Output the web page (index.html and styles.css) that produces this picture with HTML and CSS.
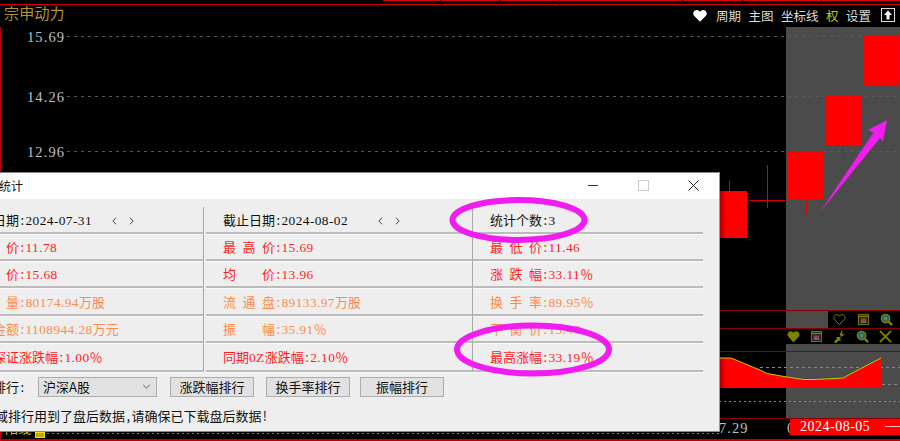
FILE: index.html
```html
<!DOCTYPE html>
<html lang="zh">
<head>
<meta charset="utf-8">
<title>区间统计</title>
<link rel="stylesheet" href="styles.css">
</head>
<body>
<main class="desktop">
  <div class="tabs"><span class="t1"></span><span class="t2"></span><span class="t3"></span><span class="t4"></span><span class="t5"></span><span class="t6"></span><span class="t7"></span></div>
  <div class="line-top"></div>
  <div class="line-left"></div>
  <header class="stock-name">宗申动力</header>
  <nav class="toolbar">
    <svg class="ico-heart" viewBox="0 0 16 14"><path d="M8 14 1.200 7.200C-.6 5.200.2 1 3.800 .6 5.800.4 7.200 1.400 8 2.800 8.800 1.400 10.200.4 12.200.6 15.800 1 16.600 5.200 14.800 7.200Z"/></svg>
    <span>周期</span><span>主图</span><span>坐标线</span><span class="hl">权</span><span>设置</span>
    <svg class="ico-up" viewBox="0 0 14 14"><rect x=".5" y=".5" width="13" height="13" fill="none" stroke="#ddd"/><path d="M7 2.500 11 7H8.500v4.500h-3V7H3Z" fill="#fff"/></svg>
  </nav>

  <div class="gray g-main"></div>
  <div class="gray g-mid"></div>
  <div class="gray g-low"></div>

  <div class="price p1">15.69</div>
  <div class="price p2">14.26</div>
  <div class="price p3">12.96</div>
  <div class="dash d1"></div>
  <div class="dash d2"></div>
  <div class="dash d3"></div>

  <div class="candle c0"></div><div class="wick w0"></div>
  <div class="doji-h"></div><div class="doji-v"></div>
  <div class="candle c1"></div><div class="wick w1"></div>
  <div class="candle c2"></div><div class="wick w2"></div>
  <div class="candle c3"></div><div class="wick w3"></div>

  <div class="rline r1"></div>
  <div class="rline r2"></div>
  <div class="rline r3"></div>
  <div class="black-strip"></div>
  <div class="icons i-a">
    <svg viewBox="0 0 14 14"><path d="M7 12.500 1.500 6.500C0 4 2 1.500 4.200 1.700 5.500 1.800 6.500 2.500 7 3.500 7.500 2.500 8.500 1.800 9.800 1.700 12 1.500 14 4 12.500 6.500Z" fill="none" stroke="#808000"/></svg>
    <svg viewBox="0 0 14 14"><rect x="1.500" y="1.500" width="11" height="11" fill="#222" stroke="#808000"/><rect x="2" y="3" width="10" height="1.500" fill="#808000"/><rect x="4" y="6" width="6" height="3" fill="#b33"/><rect x="4" y="9" width="6" height="1.500" fill="#39c"/></svg>
    <svg viewBox="0 0 14 14"><circle cx="6" cy="6" r="4.500" fill="#365" stroke="#808000" stroke-width="1.500"/><circle cx="6" cy="6" r="2" fill="#3a8a9a"/><path d="M9.500 9.500l3.500 3.500" stroke="#808000" stroke-width="2.500"/></svg>
  </div>
  <div class="icons i-b">
    <svg viewBox="0 0 14 14"><path d="M7 13.500 1 6.800C-.6 4 2 1 4.200 1.300 5.500 1.500 6.500 2.200 7 3.200 7.500 2.200 8.500 1.500 9.800 1.300 12 1 14.600 4 13 6.800Z" fill="#808000"/></svg>
    <svg viewBox="0 0 14 14"><rect x="1.500" y="1.500" width="11" height="11" fill="#222" stroke="#808000"/><rect x="2" y="3" width="10" height="1.500" fill="#808000"/><rect x="4" y="6" width="6" height="3" fill="#b33"/><rect x="4" y="9" width="6" height="1.500" fill="#39c"/></svg>
    <svg viewBox="0 0 14 14"><path d="M1 13 4.500 9 3 7.500H8V12.500L6.500 11 3 14.500ZM10 1V4.500H13L8.500 7.500 7 3.500H8.500V1Z" fill="#808000"/></svg>
    <svg viewBox="0 0 14 14"><circle cx="6" cy="6" r="4.500" fill="#365" stroke="#808000" stroke-width="1.500"/><circle cx="6" cy="6" r="2" fill="#3a8a9a"/><path d="M9.500 9.500l3.500 3.500" stroke="#808000" stroke-width="2.500"/></svg>
    <svg viewBox="0 0 14 14"><path d="M1 1 13 13M13 1 1 13" stroke="#808000" stroke-width="2"/></svg>
  </div>

  <div class="dash d4"></div>
  <div class="dash d5"></div>
  <div class="dash d6"></div>
  <svg class="area" viewBox="0 0 200 50">
    <defs><linearGradient id="edge" x1="0" x2="1" y1="0" y2="0"><stop offset="0" stop-color="#900"/><stop offset=".04" stop-color="#f00"/></linearGradient></defs>
    <path d="M0 1H12L41 13 48 16.500 68 20 85 22.500 96 22.500 115 21.500 124 21 141 12 162 1V31H0Z" fill="url(#edge)"/>
    <path d="M0 1H12L41 13 48 16.500 68 20 85 22.500 96 22.500 115 21.500 124 21 141 12 162 1" fill="none" stroke="#c8c800"/>
  </svg>

  <div class="rline r4"></div>
  <div class="axis a1">7.29</div>
  <div class="axis a2">0</div>
  <div class="date-tag">2024-08-05<i></i></div>
  <div class="legend-text">阳线</div>
  <div class="legend-box"></div>
  <div class="dash d7"></div>
  <div class="rline r5"></div>
  <div class="line-left ll2"></div>

  <section class="dialog">
    <div class="titlebar">
      <span class="title">区间统计</span>
      <span class="win-min"></span><span class="win-max"></span>
      <svg class="win-close" viewBox="0 0 11 11"><path d="M.5.5 10.500 10.500M10.500.5.5 10.500" stroke="#222" stroke-width="1"/></svg>
    </div>
    <div class="stats">
      <div class="cell k"><span>起始日期<i class="c">:</i><b>2024-07-31</b></span><span class="chev"><svg viewBox="0 0 6 10"><path d="M5 1 1 5l4 4"/></svg><svg viewBox="0 0 6 10"><path d="M1 1l4 4-4 4"/></svg></span></div>
      <div class="cell k"><span>截止日期<i class="c">:</i><b>2024-08-02</b></span><span class="chev wide"><svg viewBox="0 0 6 10"><path d="M5 1 1 5l4 4"/></svg><svg viewBox="0 0 6 10"><path d="M1 1l4 4-4 4"/></svg></span></div>
      <div class="cell k"><span>统计个数<i class="c">:</i><b>3</b></span></div>

      <div class="cell r"><span>开&ensp;盘&ensp;价<i class="c">:</i><b>11.78</b></span></div>
      <div class="cell r"><span>最&ensp;高&ensp;价<i class="c">:</i><b>15.69</b></span></div>
      <div class="cell r"><span>最&ensp;低&ensp;价<i class="c">:</i><b>11.46</b></span></div>

      <div class="cell r"><span>收&ensp;盘&ensp;价<i class="c">:</i><b>15.68</b></span></div>
      <div class="cell r"><span>均&emsp;&emsp;价<i class="c">:</i><b>13.96</b></span></div>
      <div class="cell r"><span>涨&ensp;跌&ensp;幅<i class="c">:</i><b>33.11</b>％</span></div>

      <div class="cell o"><span>成&ensp;交&ensp;量<i class="c">:</i><b>80174.94</b>万股</span></div>
      <div class="cell o"><span>流&ensp;通&ensp;盘<i class="c">:</i><b>89133.97</b>万股</span></div>
      <div class="cell o"><span>换&ensp;手&ensp;率<i class="c">:</i><b>89.95</b>％</span></div>

      <div class="cell o"><span>成交金额<i class="c">:</i><b>1108944.28</b>万元</span></div>
      <div class="cell o"><span>振&emsp;&emsp;幅<i class="c">:</i><b>35.91</b>％</span></div>
      <div class="cell o"><span>平&ensp;衡&ensp;价<i class="c">:</i><b>13.46</b></span></div>

      <div class="cell r"><span>同期深证涨跌幅<i class="c">:</i><b>1.00</b>％</span></div>
      <div class="cell r"><span>同期<b>0Z</b>涨跌幅<i class="c">:</i><b>2.10</b>％</span></div>
      <div class="cell r"><span>最高涨幅<i class="c">:</i><b>33.19</b>％</span></div>
    </div>
    <div class="controls">
      <span class="ctl-label">区间排行<i class="c">:</i></span>
      <div class="select">沪深A股<svg viewBox="0 0 10 6"><path d="M1 1l4 4 4-4"/></svg></div>
      <button class="btn">涨跌幅排行</button>
      <button class="btn">换手率排行</button>
      <button class="btn">振幅排行</button>
    </div>
    <p class="note">区域排行用到了盘后数据<i class="c">,</i>请确保已下载盘后数据<i class="c">!</i></p>
  </section>

  <svg class="marks" viewBox="0 0 900 441">
    <ellipse cx="518.500" cy="220" rx="66" ry="20" />
    <ellipse cx="533" cy="349.500" rx="76" ry="24" />
    <path class="arrow" d="M820 212 873.500 132.500 868 130 887 120 883 141 880 138Z"/>
  </svg>
</main>
</body>
</html>
```
FILE: styles.css
```css
* { box-sizing: border-box; }
html, body { margin: 0; padding: 0; background: #000; }
.desktop { position: relative; width: 900px; height: 441px; overflow: hidden; background: #000; font-family: "Noto Sans CJK SC", sans-serif; }
.desktop > * { position: absolute; }

.tabs { left: 383px; right: 0; top: 0; height: 1px; display: flex; gap: 1px; }
.tabs span { background: #e00000; }
.t1 { width: 57px; } .t2 { width: 59px; } .t3 { width: 58px; } .t4 { width: 122px; } .t5 { width: 59px; } .t6 { width: 78px; } .t7 { flex: 1; }
.line-top { left: 0; right: 0; top: 4px; height: 1px; background: #d00000; }
.line-left { left: 0; top: 27px; width: 1px; height: 146px; background: #c00000; }
.ll2 { top: 432px; height: 9px; }
.stock-name { left: 4px; top: 2px; font-size: 15px; line-height: 21px; letter-spacing: 0.2px; color: #b49238; }
.toolbar { left: 693px; top: 6px; height: 18px; display: flex; align-items: center; gap: 7.500px; font-size: 12.500px; color: #ddd; white-space: nowrap; }
.toolbar .hl { color: #c8c800; }
.ico-heart { width: 14px; height: 13px; fill: #fff; margin-right: 1.500px; }
.ico-up { width: 14px; height: 14px; margin-left: 2.500px; }

.gray { background: #4b4b4b; }
.g-main { left: 786px; right: 0; top: 27px; height: 284px; }
.g-mid { left: 786px; width: 42px; top: 311px; height: 17px; }
.g-low { left: 786px; right: 0; top: 344px; height: 75px; }

.price { left: 27px; font-family: "Liberation Serif", serif; font-size: 14.500px; line-height: 16px; letter-spacing: 1.100px; color: #b8c0c8; }
.p1 { top: 29px; } .p2 { top: 89px; } .p3 { top: 144px; }
.dash { height: 1px; background: repeating-linear-gradient(90deg, #5a5a5a 0 3px, transparent 3px 7px); }
.d1 { left: 67px; right: 0; top: 36px; }
.d2 { left: 67px; right: 0; top: 96px; }
.d3 { left: 67px; right: 0; top: 151px; }
.d4 { left: 760px; right: 0; top: 367px; background: repeating-linear-gradient(90deg, #888 0 3px, transparent 3px 6px); }
.d5 { left: 786px; right: 0; top: 384px; background: repeating-linear-gradient(90deg, #888 0 3px, transparent 3px 6px); }
.d6 { left: 719px; right: 0; top: 401px; background: repeating-linear-gradient(90deg, #888 0 2px, transparent 2px 5px); }
.d7 { left: 47px; width: 672px; top: 433px; background: repeating-linear-gradient(90deg, #777 0 2px, transparent 2px 5px); }

.candle, .wick, .doji-h, .doji-v { background: #f00; }
.c0 { left: 700px; width: 47px; top: 191px; height: 47px; background: linear-gradient(90deg, #900 19px, #f00 26px); }
.w0 { left: 729px; width: 1px; top: 180px; height: 11px; background: #c00; }
.doji-h { left: 749px; width: 36px; top: 200px; height: 1px; background: #d00; }
.doji-v { left: 767px; width: 1px; top: 165px; height: 43px; background: #d00; }
.c1 { left: 787px; width: 36px; top: 151px; height: 49px; }
.w1 { left: 806px; width: 1px; top: 200px; height: 13px; background: #d00; }
.c2 { left: 825px; width: 36px; top: 96px; height: 49px; }
.w2 { left: 843px; width: 1px; top: 145px; height: 14px; background: #d00; }
.c3 { left: 863px; width: 36px; top: 36px; height: 50px; }
.w3 { left: 881px; width: 1px; top: 86px; height: 1px; background: #d00; }

.rline { left: 719px; right: 0; height: 1px; background: #8a0000; }
.r1 { top: 310px; } .r2 { top: 328px; } .r3 { top: 351px; } .r4 { top: 418px; }
.r5 { left: 0; top: 439px; height: 2px; background: #c00000; }
.black-strip { left: 828px; right: 0; top: 311px; height: 17px; background: #000; }
.icons { display: flex; align-items: center; }
.icons svg { width: 13px; height: 13px; flex: none; }
.i-a { left: 833px; top: 312px; height: 15px; gap: 10.500px; }
.i-b { left: 786px; top: 329px; height: 15px; gap: 10px; width: 114px; background: #000; padding-left: 1px; }

.area { left: 719px; top: 357px; width: 200px; height: 50px; }
.axis { font-family: "Liberation Serif", serif; font-size: 14.500px; line-height: 16px; letter-spacing: 1px; color: #b8c0c8; top: 420px; }
.a1 { left: 719px; } .a2 { left: 787px; }
.date-tag { left: 790px; right: 0; top: 419px; height: 16px; background: #f00; color: #fff; font-family: "Liberation Serif", serif; font-size: 14px; line-height: 16px; letter-spacing: 0.500px; padding-left: 10px; }
.date-tag i { position: absolute; left: 95px; top: 7px; width: 15px; height: 1px; background: #fbb; }
.legend-text { left: 5px; top: 420px; font-size: 13px; line-height: 16px; color: #c8c800; }
.legend-box { left: 35px; top: 432px; width: 10px; height: 6px; background: #c8a000; border: 1px solid #e8e800; }

.dialog { left: -40px; top: 172px; width: 760px; height: 260px; background: #eee; border-top: 1px solid #888; border-right: 1px solid #999; border-bottom: 1px solid #888; font-size: 13px; display: flex; flex-direction: column; }
.titlebar { position: relative; height: 26px; background: #fff; flex: none; }
.title { position: absolute; left: 15px; top: 3px; font-size: 12px; line-height: 20px; color: #111; }
.win-min { position: absolute; left: 628px; top: 12px; width: 10px; height: 1px; background: #333; }
.win-max { position: absolute; left: 678px; top: 7px; width: 11px; height: 11px; border: 1px solid #ccc; }
.win-close { position: absolute; left: 728px; top: 7px; width: 11px; height: 11px; }

.stats { display: grid; grid-template-columns: 244px 269px 230px; grid-template-rows: 27px 27px 27px 28px 27px 29px; margin-top: 8px; flex: none; }
.cell { display: flex; align-items: center; line-height: 18px; white-space: nowrap; border-bottom: 2px solid #bbb; box-shadow: 0 1px 0 #fafafa; padding-top: 2px; border-right: 1px solid #a8a8a8; }
.cell:nth-child(3n+1) { padding-left: 7px; }
.cell:nth-child(3n+2) { padding-left: 17px; margin-left: 2px; }
.cell:nth-child(3n) { padding-left: 17px; border-right: 0; }
.cell b { font-family: "Liberation Serif", serif; font-size: 13.400px; font-weight: 400; letter-spacing: 0.400px; }
.c { display: inline-block; width: 6.500px; text-align: center; font-style: normal; }
.k { color: #111; }
.r { color: #ff1e1e; }
.o { color: #ff8a4a; }
.chev { display: flex; gap: 12px; margin-left: 20px; }
.chev.wide { margin-left: 30px; }
.chev svg { width: 5px; height: 10px; fill: none; stroke: #222; overflow: visible; }

.controls { display: flex; align-items: center; height: 21px; margin-top: 4px; padding-left: 7px; flex: none; }
.ctl-label { width: 71px; color: #111; }
.select { position: relative; width: 119px; height: 20px; background: #e1e1e1; border: 1px solid #adadad; line-height: 18px; padding-left: 4px; color: #111; }
.select svg { position: absolute; right: 5px; top: 6px; width: 9px; height: 5px; fill: none; stroke: #444; }
.btn { width: 84px; height: 20px; padding: 0; background: #e1e1e1; border: 1px solid #adadad; font: inherit; line-height: 18px; color: #111; margin-left: 13px; }
.btn + .btn { margin-left: 12px; }
.btn:last-child { margin-left: 10px; }
.note { margin: 10px 0 0 22px; font-size: 13px; line-height: 18px; color: #111; white-space: nowrap; }

.marks { left: 0; top: 0; width: 900px; height: 441px; pointer-events: none; fill: none; }
.marks ellipse { stroke: #f01cf0; stroke-width: 6; }
.marks .arrow { fill: #f01cf0; }
```
